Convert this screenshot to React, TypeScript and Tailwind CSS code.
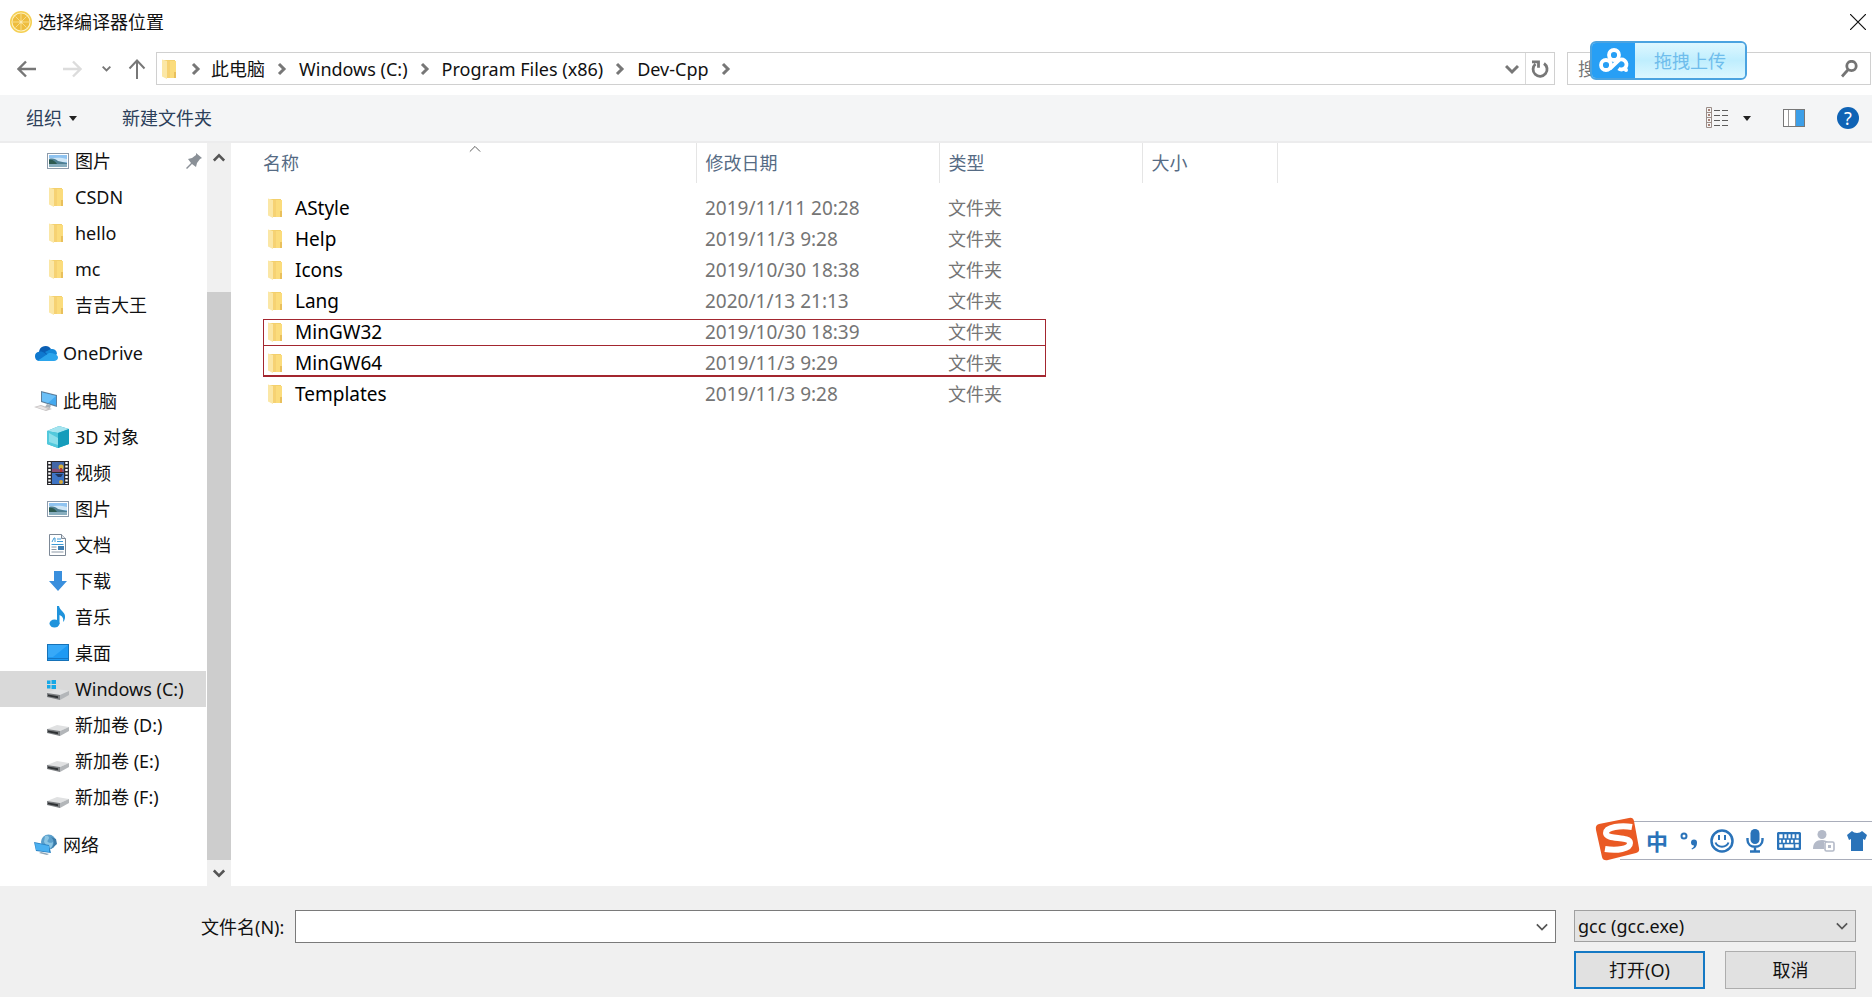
import React, { useState } from "react";

const FONT = "font-['Noto_Sans','Noto_Sans_CJK_SC',sans-serif] font-normal";

function FolderIcon() {
  return (
    <svg width="22" height="22" viewBox="0 0 22 22" aria-hidden="true">
      <path d="M4 2h11v17H4z" fill="#f3d06c" />
      <path d="M2 1.500 7 3v18l-5-2.500z" fill="#fbe7a6" />
      <path d="M7 3h9v17H7z" fill="#fbdc7c" />
      <path d="M7 3h3v17H7z" fill="#f6d273" />
      <path d="M14 14h2v6h-2z" fill="#e9c05c" />
    </svg>
  );
}

function PictureIcon() {
  return (
    <svg width="22" height="22" viewBox="0 0 22 22" aria-hidden="true">
      <rect x=".5" y="3.500" width="21" height="15" fill="#fff" stroke="#8d9bab" />
      <rect x="2" y="5" width="18" height="12" fill="#8fc3f0" />
      <path d="M2 8c5 0 12-1 18 1v3H2z" fill="#cfe6f6" />
      <path d="M2 9c4-1 7 0 9 2l9 2v1H2z" fill="#4f7f92" />
      <path d="M2 10c3-1 6 1 8 4H2z" fill="#2d5a50" />
      <path d="M2 14h18v3H2z" fill="#88aebf" />
    </svg>
  );
}

function OneDriveIcon() {
  return (
    <svg width="24" height="22" viewBox="0 0 24 22" aria-hidden="true">
      <path d="M5 10a6.500 6.500 0 0 1 12-3l-3 6-9 3z" fill="#0a5fb4" />
      <path d="M17 7a5 5 0 0 1 6 5l-5 5-7-7z" fill="#1488d8" />
      <path d="M5 19a4.700 4.700 0 0 1 0-9.300c2-.4 4 .3 6 1.500L19 19z" fill="#0f79cf" />
      <path d="M4 18.500 15 11c5 0 9 2 9 4.500 0 2-2 3.500-4 3.500H5z" fill="#2ba5ec" />
    </svg>
  );
}

function ComputerIcon() {
  return (
    <svg width="24" height="24" viewBox="0 0 24 24" aria-hidden="true">
      <path d="m7 2 16 4v12L7 13z" fill="#5e7f9c" />
      <path d="m8 3.500 14 3.500v9.500L8 12z" fill="#43a9ef" />
      <path d="m8 3.500 14 3.500-8 7-6-2z" fill="#6cc0f7" />
      <path d="m13 15 4 1.500-1 2.500-5-1z" fill="#a9b1b8" />
      <path d="m0 18 7-2 11 4-6 2z" fill="#c6c2c2" />
      <path d="m2 18 5-1 7 3-3 1z" fill="#e9e5e5" />
    </svg>
  );
}

function CubeIcon() {
  return (
    <svg width="22" height="22" viewBox="0 0 22 22" aria-hidden="true">
      <path d="M0 5 12 0l10 3v15l-11 4-11-4z" fill="#2fb2cc" />
      <path d="M0 5 12 0l10 3-11 4z" fill="#a5e4ef" />
      <path d="m0 5 11 2v15L0 18z" fill="#52c9dc" />
      <path d="m2 7 9 5v7l-9-3z" fill="#8bdfeb" />
      <path d="m11 7 11-4v15l-11 4z" fill="#159cbb" />
    </svg>
  );
}

function VideoIcon() {
  return (
    <svg width="22" height="24" viewBox="0 0 22 24" aria-hidden="true">
      <rect width="22" height="24" fill="#2b2b2f" />
      <path d="M2.500 1v22M19.500 1v22" stroke="#fff" strokeWidth="2.500" strokeDasharray="2 1.500" />
      <path d="M5 1h12v10H5z" fill="#4267a8" />
      <path d="M5 8c4-2 8 2 12 0v3H5z" fill="#864e74" />
      <path d="M5 12h12v11H5z" fill="#3e74c4" />
      <circle cx="14" cy="6" r="2.500" fill="#d9b13b" />
      <path d="M8 13h8l-2 3h-3z" fill="#24375c" />
      <circle cx="14" cy="21" r="2" fill="#d9a93b" />
      <path d="M13 7h2v4h-2z" fill="#b33a31" />
    </svg>
  );
}

function DocumentIcon() {
  return (
    <svg width="22" height="22" viewBox="0 0 22 22" aria-hidden="true">
      <path d="M2.500.5h12l4 4v17h-16z" fill="#fff" stroke="#7c8896" />
      <path d="M14.500.5v4h4" fill="#e3e7eb" stroke="#7c8896" />
      <path d="m5 8 2-4h1v4M10 5h4M10 7.500h6M4.500 10.500h12" stroke="#3e9ad6" fill="none" />
      <path d="M4.500 13h5M4.500 15.500h5M4.500 18h12" stroke="#8b98a6" />
      <path d="M11 12h6v4h-6z" fill="#3f7fb3" />
    </svg>
  );
}

function DownloadIcon() {
  return (
    <svg width="22" height="22" viewBox="0 0 22 22" aria-hidden="true">
      <path d="M7 1h8v10h5l-9 10-9-10h5z" fill="#3a8fdd" />
    </svg>
  );
}

function MusicIcon() {
  return (
    <svg width="22" height="24" viewBox="0 0 22 24" aria-hidden="true">
      <ellipse cx="7.500" cy="18.500" rx="5" ry="4" fill="#1f93dc" />
      <path d="M10 1h2c1 5 7 6 6 12-.4 2-1 3-2 4 1-4-1-6-3.500-7v9H10z" fill="#1f93dc" />
    </svg>
  );
}

function DesktopIcon() {
  return (
    <svg width="22" height="22" viewBox="0 0 22 22" aria-hidden="true">
      <rect x=".5" y="2.500" width="21" height="16" fill="#1e9af3" stroke="#1672b8" />
      <path d="M1 3h20L6 15H1z" fill="#37a9f8" />
      <path d="M1 16.500h20" stroke="#1577c4" />
    </svg>
  );
}

function DriveIcon({ system = false }: { system?: boolean }) {
  return (
    <svg width="22" height="24" viewBox="0 0 22 24" aria-hidden="true">
      <path d="m0 16 10-4 12 2-9 4z" fill="#e0e1e2" />
      <path d="m0 16 13 2V23L0 20z" fill="#7b7e81" />
      <path d="m13 18 9-4v4l-9 5z" fill="#b3b6b9" />
      <path d="m1 17.500 10 1.700v2L1 19.300z" fill="#2e3133" />
      {system && (
        <path d="M0 3.500h3.500V7H0zM4.500 3H9v4H4.500zM0 8h3.500v3.500H0zM4.500 8H9v4H4.500z" fill="#17a8e6" />
      )}
    </svg>
  );
}

function NetworkIcon() {
  return (
    <svg width="24" height="24" viewBox="0 0 24 24" aria-hidden="true">
      <circle cx="14.500" cy="9" r="7.500" fill="#5b9fcb" />
      <path d="M11 3c4-1 5 2 3 4s2 4 5 2c0 4-2 6-4 7l-5-7z" fill="#8cc6e4" />
      <path d="M17 4c4 4 3 8 0 12l6-5-1-5z" fill="#3b7ba8" />
      <path d="m0 9 15 3 2 8-15-2z" fill="#2d84c4" />
      <path d="m1 10 14 3v6L2 17z" fill="#4bb0f0" />
      <path d="m5 20 8 2 2-1-8-2z" fill="#8da4b5" />
    </svg>
  );
}

function Chevron({ className, d, size = 14, width = 3 }: { className?: string; d: string; size?: number; width?: number }) {
  return (
    <svg className={className} width={size} height={size} viewBox="0 0 14 14" fill="none" stroke="currentColor" strokeWidth={width} aria-hidden="true">
      <path d={d} />
    </svg>
  );
}

const RIGHT = "m4 2 5 5-5 5";
const DOWN = "m1 4 6 6 6-6";
const UP = "m1 10 6-6 6 6";

type Item = { label: string; icon: React.ReactNode; root?: boolean; active?: boolean; pinned?: boolean };

const groups: Item[][] = [
  [
    { label: "图片", icon: <PictureIcon />, pinned: true },
    { label: "CSDN", icon: <FolderIcon /> },
    { label: "hello", icon: <FolderIcon /> },
    { label: "mc", icon: <FolderIcon /> },
    { label: "吉吉大王", icon: <FolderIcon /> },
  ],
  [{ label: "OneDrive", icon: <OneDriveIcon />, root: true }],
  [
    { label: "此电脑", icon: <ComputerIcon />, root: true },
    { label: "3D 对象", icon: <CubeIcon /> },
    { label: "视频", icon: <VideoIcon /> },
    { label: "图片", icon: <PictureIcon /> },
    { label: "文档", icon: <DocumentIcon /> },
    { label: "下载", icon: <DownloadIcon /> },
    { label: "音乐", icon: <MusicIcon /> },
    { label: "桌面", icon: <DesktopIcon /> },
    { label: "Windows (C:)", icon: <DriveIcon system />, active: true },
    { label: "新加卷 (D:)", icon: <DriveIcon /> },
    { label: "新加卷 (E:)", icon: <DriveIcon /> },
    { label: "新加卷 (F:)", icon: <DriveIcon /> },
  ],
  [{ label: "网络", icon: <NetworkIcon />, root: true }],
];

const files = [
  ["AStyle", "2019/11/11 20:28"],
  ["Help", "2019/11/3 9:28"],
  ["Icons", "2019/10/30 18:38"],
  ["Lang", "2020/1/13 21:13"],
  ["MinGW32", "2019/10/30 18:39"],
  ["MinGW64", "2019/11/3 9:29"],
  ["Templates", "2019/11/3 9:28"],
];

const crumbs = ["此电脑", "Windows (C:)", "Program Files (x86)", "Dev-Cpp"];

function TitleBar() {
  return (
    <header className="flex h-[43px] items-center justify-between pl-[9px] pr-[6px]">
      <div className="flex items-center gap-[5px]">
        <svg width="24" height="24" viewBox="0 0 24 24" aria-hidden="true">
          <circle cx="12" cy="12" r="11" fill="#f5cf52" />
          <circle cx="12" cy="12" r="9.500" fill="#fdf3c4" />
          <circle cx="12" cy="12" r="8.500" fill="#eebd3e" />
          <path d="M12 4v16M4 12h16M6.500 6.500l11 11M17.500 6.500l-11 11" stroke="#f8dc86" />
          <circle cx="12" cy="12" r="1.500" fill="#fbeaaf" />
        </svg>
        <h1>选择编译器位置</h1>
      </div>
      <button aria-label="关闭" className="flex p-0">
        <svg width="16" height="16" viewBox="0 0 16 16" stroke="#111" strokeWidth="1.200" aria-hidden="true">
          <path d="m0 0 16 16M16 0 0 16" />
        </svg>
      </button>
    </header>
  );
}

function AddressRow() {
  return (
    <div className="flex h-[52px] items-start pt-[9px]">
      <div className="flex h-[33px] w-[156px] shrink-0 items-center pl-[17px] text-[#777]">
        <button aria-label="后退">
          <svg width="20" height="18" viewBox="0 0 20 18" fill="none" stroke="currentColor" strokeWidth="2.400" aria-hidden="true">
            <path d="M19 9H1.500M9 1.500 1.500 9 9 16.500" />
          </svg>
        </button>
        <button aria-label="前进" className="ml-[25px] text-[#dcdcdc]">
          <svg width="20" height="18" viewBox="0 0 20 18" fill="none" stroke="currentColor" strokeWidth="2.400" aria-hidden="true">
            <path d="M1 9h17.500M11 1.500 18.500 9 11 16.500" />
          </svg>
        </button>
        <button aria-label="最近位置" className="ml-[20px]">
          <Chevron d={DOWN} size={9} width={3} />
        </button>
        <button aria-label="上移" className="ml-[17px]">
          <svg width="18" height="20" viewBox="0 0 18 20" fill="none" stroke="currentColor" strokeWidth="2" aria-hidden="true">
            <path d="M9 20V2M1.500 9.500 9 1.500l7.500 8" />
          </svg>
        </button>
      </div>
      <div className="flex h-[33px] min-w-0 flex-1 border border-[#d0d0d0]">
        <nav aria-label="路径" className="flex min-w-0 flex-1 items-center pl-[3px]">
          <FolderIcon />
          <Chevron d={RIGHT} size={14} className="ml-[7px] mr-[8px] text-[#777]" />
          {crumbs.map((c) => (
            <React.Fragment key={c}>
              <button className="whitespace-nowrap">{c}</button>
              <Chevron d={RIGHT} size={14} className="mx-[10px] text-[#777]" />
            </React.Fragment>
          ))}
        </nav>
        <button aria-label="以前的位置" className="flex w-[26px] items-center justify-center text-[#777]">
          <Chevron d={DOWN} size={14} />
        </button>
        <button aria-label="刷新" className="flex w-[29px] items-center justify-center border-l border-[#d9d9d9] text-[#777]">
          <svg width="18" height="18" viewBox="0 0 18 18" fill="none" stroke="currentColor" strokeWidth="2.800" aria-hidden="true">
            <path d="M13 3.500A7 7 0 1 1 4.500 4M1 1.800h6.500v6" />
          </svg>
        </button>
      </div>
      <div className="relative ml-[12px] mr-[1px] flex h-[33px] w-[304px] shrink-0 items-center border border-[#d0d0d0]">
        <input aria-label="搜索" placeholder="搜" className="h-full min-w-0 flex-1 pl-[10px] outline-none placeholder:text-[#777]" />
        <svg className="mr-[12px]" width="17" height="18" viewBox="0 0 17 18" fill="none" stroke="#747474" strokeWidth="2.800" aria-hidden="true">
          <circle cx="10.500" cy="6" r="4.700" />
          <path d="M7 9.800 1 16.500" />
        </svg>
        <button className="absolute -top-[12px] left-[22px] flex h-[39px] w-[157px] overflow-hidden rounded-[6px] border-2 border-[#4ba3e0] bg-[#c5eefd] text-[#6fbdec]">
          <span className="flex h-full w-[43px] items-center justify-center bg-[#279ff5]">
            <svg width="30" height="26" viewBox="0 0 30 26" fill="none" stroke="#fff" strokeWidth="3.800" aria-hidden="true">
              <circle cx="15" cy="7" r="5" />
              <circle cx="7" cy="17" r="5" />
              <path d="M11 20.500 18.500 13.500a5 5 0 1 1 1 7" />
              <circle cx="27" cy="22" r="1" strokeWidth="2" />
            </svg>
          </span>
          <span className="flex h-full flex-1 items-center justify-center bg-linear-to-b from-[#def7ff] via-[#bfeefe] to-[#dcf7ff]">拖拽上传</span>
        </button>
      </div>
    </div>
  );
}

function Toolbar() {
  return (
    <div className="flex h-[48px] items-center border-b-2 border-[#ececed] bg-[#f4f5f6] pl-[26px] pr-[13px] text-[#2c405a]">
      <button className="flex items-center gap-[7px]">
        组织
        <svg width="8" height="5" viewBox="0 0 8 5" fill="#222" aria-hidden="true"><path d="M0 0h8L4 5z" /></svg>
      </button>
      <button className="ml-[45px]">新建文件夹</button>
      <div className="ml-auto flex items-center">
        <button aria-label="更改视图" className="flex items-center gap-[15px]">
          <svg width="22" height="22" viewBox="0 0 22 22" fill="none" aria-hidden="true">
            <path d="M.5.5h5v20h-5zM.5 5.500h5M.5 10.500h5M.5 15.500h5" stroke="#9a8d88" />
            <path d="M2 3h2M2 8h2M2 13h2M2 18h2" stroke="#8d5a4a" strokeWidth="1.500" />
            <path d="M8 3.500h6M16 3.500h6M8 8.500h6M16 8.500h6M8 13.500h6M16 13.500h6M8 18.500h6M16 18.500h6" stroke="#5c5c5c" />
          </svg>
          <svg width="8" height="5" viewBox="0 0 8 5" fill="#222" aria-hidden="true"><path d="M0 0h8L4 5z" /></svg>
        </button>
        <button aria-label="预览窗格" className="ml-[32px]">
          <svg width="22" height="18" viewBox="0 0 22 18" fill="none" aria-hidden="true">
            <rect x=".5" y=".5" width="21" height="17" fill="#fff" stroke="#777" />
            <path d="M5.500 1v16M12.500 1v16" stroke="#999" />
            <path d="M13 1h8v16h-8z" fill="#3d9fe8" />
          </svg>
        </button>
        <button aria-label="帮助" className="ml-[32px] flex size-[22px] items-center justify-center rounded-full bg-[#0f63b5] text-[18px] text-white">?</button>
      </div>
    </div>
  );
}

function Sidebar() {
  return (
    <>
      <nav aria-label="导航窗格" className="flex w-[207px] shrink-0 flex-col gap-[12px] pb-[23px] pr-px">
        {groups.map((g, i) => (
          <ul key={i}>
            {g.map((it) => (
              <li key={it.label}>
                <a
                  href="#"
                  className={
                    "flex h-[36px] items-center whitespace-nowrap " +
                    (it.root ? "gap-[5px] pl-[34px] " : "gap-[6px] pl-[47px] ") +
                    (it.active ? "bg-[#d9d9d9]" : "")
                  }
                >
                  {it.icon}
                  <span>{it.label}</span>
                  {it.pinned && (
                    <svg className="ml-auto mr-[4px]" width="16" height="16" viewBox="0 0 16 16" fill="#8a9097" aria-hidden="true">
                      <path d="m10 0 6 5-2 1-3 4-1 4-4-3-5 5-1-1 5-5-3-4 4-1 4-3z" />
                    </svg>
                  )}
                </a>
              </li>
            ))}
          </ul>
        ))}
      </nav>
      <div className="flex w-[24px] shrink-0 flex-col bg-[#f0f0f0] text-[#555]">
        <button aria-label="向上滚动" className="flex h-[30px] items-center justify-center">
          <Chevron d={UP} size={12} />
        </button>
        <div className="flex-[119]" />
        <div className="flex-[568] bg-[#cdcdcd]" />
        <button aria-label="向下滚动" className="flex h-[26px] items-center justify-center">
          <Chevron d={DOWN} size={12} />
        </button>
      </div>
    </>
  );
}

function FileTable() {
  return (
    <div className="relative min-w-0 flex-1">
      <table className="w-full table-fixed border-collapse text-left">
        <colgroup>
          <col className="w-[465px]" />
          <col className="w-[243px]" />
          <col className="w-[203px]" />
          <col className="w-[135px]" />
          <col />
        </colgroup>
        <thead className="text-[#566b84]">
          <tr className="h-[40px]">
            <th className="relative border-r border-[#e5e5e5] p-0 pl-[32px] font-normal">
              名称
              <Chevron d={UP} size={12} width={1} className="absolute left-[238px] top-0 text-[#444]" />
            </th>
            <th className="border-r border-[#e5e5e5] p-0 pl-[9px] font-normal">修改日期</th>
            <th className="border-r border-[#e5e5e5] p-0 pl-[9px] font-normal">类型</th>
            <th className="border-r border-[#e5e5e5] p-0 pl-[9px] font-normal">大小</th>
            <td />
          </tr>
        </thead>
        <tbody className="text-[#757575] before:block before:h-[9px]">
          {files.map(([name, date]) => (
            <tr key={name} className="h-[31px]">
              <td className="p-0 pl-[35px]">
                <span className="flex items-center gap-[7px] text-[19px] text-black">
                  <FolderIcon />
                  {name}
                </span>
              </td>
              <td className="p-0 pl-[9px] text-[19px]">{date}</td>
              <td className="p-0 pl-[9px]">文件夹</td>
              <td />
              <td />
            </tr>
          ))}
        </tbody>
      </table>
      <div className="pointer-events-none absolute left-[32px] top-[176px] h-[58px] w-[783px] border border-b-2 border-[#a3262f]">
        <div className="h-[26px] border-b border-[#a3262f]" />
      </div>
    </div>
  );
}

function ImeBar() {
  return (
    <div className="absolute bottom-[26px] right-0 flex h-[39px] w-[252px] items-center border-y border-[#a9adba] bg-white text-[#2a73b9]">
      <svg className="absolute -left-[25px] -top-[5px]" width="45" height="44" viewBox="0 0 45 44" fill="none" aria-hidden="true">
        <path d="M4 7 34 1q4-1 5 3l5 27q1 4-3 5l-28 7q-5 1-6-3L1 13q-1-5 3-6z" fill="#ea5a24" />
        <path d="M37 10C26 8 11 10 11 16c0 7 24 3 24 10 0 6-13 8-25 6" stroke="#fff" strokeWidth="6" />
      </svg>
      <div className="flex w-full items-center justify-between pl-[26px] pr-[5px]">
        <button className="text-[22px] font-bold">中</button>
        <svg width="18" height="18" viewBox="0 0 18 18" fill="none" aria-hidden="true">
          <circle cx="4" cy="4" r="2.500" stroke="currentColor" strokeWidth="2" />
          <path d="M14 7.500a3 3 0 0 1 3 3c0 4-2 6-5 7l-.5-1c2-1 2.500-2 2.500-3a3 3 0 0 1 0-6z" fill="currentColor" />
        </svg>
        <svg width="24" height="24" viewBox="0 0 24 24" fill="none" stroke="currentColor" strokeWidth="2.500" aria-hidden="true">
          <circle cx="12" cy="12" r="10.500" />
          <path d="M9 6v5M15 6v5M5.500 13.500c2 5.500 11 5.500 13 0" strokeWidth="2" />
        </svg>
        <svg width="18" height="24" viewBox="0 0 18 24" fill="none" stroke="currentColor" strokeWidth="2.400" aria-hidden="true">
          <rect x="4.500" y="0" width="9" height="15" rx="4.500" fill="currentColor" stroke="none" />
          <path d="M1.500 9v2c0 9 15 9 15 0V9M9 17v5M4 22.500h10" />
        </svg>
        <svg width="24" height="18" viewBox="0 0 24 18" fill="none" stroke="currentColor" aria-hidden="true">
          <rect x="1" y="1" width="22" height="16" rx="1.500" fill="#fff" strokeWidth="2.500" />
          <path d="M2 7h20M2 11.500h20M6.500 2v5M10.500 2v5M14.500 2v5M18.500 2v5M5 7v4M9 7v4M13 7v4M17 7v4M6.500 12v4M17.500 12v4" strokeWidth="1.700" />
        </svg>
        <svg width="22" height="22" viewBox="0 0 22 22" fill="#b4bac8" aria-hidden="true">
          <circle cx="9" cy="4.500" r="4.500" />
          <path d="M0 19c0-6 3-9 9-9 3 0 5 1 6 2h-4v7z" />
          <rect x="12" y="12" width="9" height="9" rx="1.500" fill="#fff" stroke="#b4bac8" strokeWidth="1.600" />
          <path d="M15 15h3v3h-3z" />
        </svg>
        <svg width="20" height="20" viewBox="0 0 20 20" fill="currentColor" aria-hidden="true">
          <path d="M5 0c2 2.500 8 2.500 10 0l5 4-2 5-2-1v12H4V8L2 9 0 4z" />
        </svg>
      </div>
    </div>
  );
}

function Footer() {
  const [name, setName] = useState("");
  return (
    <footer className="flex gap-[18px] bg-[#f0f0f0] pb-[8px] pl-[201px] pr-[16px] pt-[24px]">
      <div className="flex h-[33px] min-w-0 flex-1 items-center">
        <label htmlFor="filename" className="w-[94px] whitespace-nowrap">文件名(N):</label>
        <div className="flex h-full min-w-0 flex-1 items-center border border-[#7a7a7a] bg-white">
          <input id="filename" value={name} onChange={(e) => setName(e.target.value)} className="h-full min-w-0 flex-1 px-[4px] outline-none" />
          <Chevron d={DOWN} size={12} width={2} className="mr-[7px] text-[#555]" />
        </div>
      </div>
      <div className="flex w-[282px] shrink-0 flex-col gap-[9px]">
        <div className="relative">
          <select aria-label="文件类型" className="h-[32px] w-full appearance-none border border-[#a0a0a0] bg-[#e3e3e3] pl-[3px]">
            <option>gcc (gcc.exe)</option>
          </select>
          <Chevron d={DOWN} size={12} width={2} className="pointer-events-none absolute right-[8px] top-[10px] text-[#555]" />
        </div>
        <div className="flex justify-between">
          <button className="h-[38px] w-[131px] border-2 border-[#1579c4] bg-[#e1e1e1]">打开(O)</button>
          <button className="h-[38px] w-[131px] border border-[#adadad] bg-[#e1e1e1]">取消</button>
        </div>
      </div>
    </footer>
  );
}

export default function App() {
  return (
    <div className={"flex min-h-screen flex-col bg-white text-[18px] leading-[24px] text-[#111] " + FONT}>
      <TitleBar />
      <AddressRow />
      <Toolbar />
      <main className="relative flex flex-1">
        <Sidebar />
        <FileTable />
        <ImeBar />
      </main>
      <Footer />
    </div>
  );
}
